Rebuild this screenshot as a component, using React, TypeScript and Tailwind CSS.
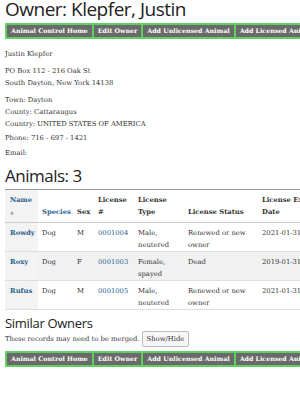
const serif = "font-['DejaVu_Serif',serif]";
const sans = "font-['Open_Sans',sans-serif]";

const actions = [
  "Animal Control Home",
  "Edit Owner",
  "Add Unlicensed Animal",
  "Add Licensed Animal",
];

function ActionBar() {
  return (
    <div className="flex w-max gap-[2px] bg-[#5fcf5f] p-[2px]">
      {actions.map((a) => (
        <span
          key={a}
          className={`${serif} whitespace-nowrap bg-[#6a6a6a] px-[4px] py-[1px] text-[6.3px] font-bold leading-[10px] text-white`}
        >
          {a}
        </span>
      ))}
    </div>
  );
}

const animals = [
  { name: "Rowdy", species: "Dog", sex: "M", lic: "0001004", type: ["Male,", "neutered"], status: ["Renewed or new", "owner"], exp: "2021-01-31" },
  { name: "Roxy", species: "Dog", sex: "F", lic: "0001003", type: ["Female,", "spayed"], status: ["Dead"], exp: "2019-01-31" },
  { name: "Rufus", species: "Dog", sex: "M", lic: "0001005", type: ["Male,", "neutered"], status: ["Renewed or new", "owner"], exp: "2021-01-31" },
];

export default function App() {
  return (
    <div className={`h-[403px] w-[300px] overflow-hidden bg-white pl-[5px] text-[#333] ${serif}`}>
      <h1 className={`${sans} -mt-[2px] mb-[3px] whitespace-nowrap text-[19px] leading-[22px] tracking-[-0.5px] text-[#222]`}>
        Owner: Klepfer, Justin
      </h1>
      <ActionBar />

      <div className="mt-[9px] text-[6.8px] leading-[12px]">
        <p>Justin Klepfer</p>
        <p className="mt-[5px]">PO Box 112 - 216 Oak St</p>
        <p>South Dayton, New York 14138</p>
        <p className="mt-[5px]">Town: Dayton</p>
        <p>County: Cattaraugus</p>
        <p>Country: UNITED STATES OF AMERICA</p>
        <p className="mt-[2px]">Phone: 716 - 697 - 1421</p>
        <p className="mt-[3px]">Email:</p>
      </div>

      <h2 className={`${sans} mt-[7px] w-[295px] border-b border-[#999] pb-[3px] text-[17px] leading-[20px] tracking-[-0.5px] text-[#222]`}>
        Animals: 3
      </h2>

      <table className="w-[333px] table-fixed border-collapse text-left text-[6.8px] leading-[12px]">
        <thead>
          <tr className="border-b border-[#ccc] align-bottom font-bold">
            <th className="w-[33px] bg-[#f3f3f3] pb-[4px] pl-[5px] pt-[4px] align-top text-[#2b5f8f]">
              Name
              <div className="text-[5px] font-normal text-[#aaa]">▲</div>
            </th>
            <th className="w-[35px] pb-[4px] pl-[4px] text-[#2b5f8f]">Species</th>
            <th className="w-[21px] pb-[4px] pl-[4px]">Sex</th>
            <th className="w-[40px] pb-[4px] pl-[4px]">License<br />#</th>
            <th className="w-[50px] pb-[4px] pl-[4px]">License<br />Type</th>
            <th className="w-[74px] pb-[4px] pl-[4px]">License Status</th>
            <th className="w-[80px] whitespace-nowrap pb-[4px] pl-[4px]">License Expiration<br />Date</th>
          </tr>
        </thead>
        <tbody>
          {animals.map((a, i) => (
            <tr
              key={a.name}
              className={`border-b border-[#ddd] align-top ${i === 1 ? "bg-[#f1f1f1]" : ""}`}
            >
              <td className="h-[29px] bg-[#f3f3f3] pl-[5px] pt-[4px] font-bold text-[#2b5f8f]">{a.name}</td>
              <td className="pl-[4px] pt-[4px]">{a.species}</td>
              <td className="pl-[4px] pt-[4px]">{a.sex}</td>
              <td className="pl-[4px] pt-[4px] text-[#2b5f8f]">{a.lic}</td>
              <td className="pl-[4px] pt-[4px]">
                {a.type[0]}
                <br />
                {a.type[1]}
              </td>
              <td className="pl-[4px] pt-[4px]">
                {a.status.map((s, j) => (
                  <div key={j}>{s}</div>
                ))}
              </td>
              <td className="pl-[4px] pt-[4px]">{a.exp}</td>
            </tr>
          ))}
        </tbody>
      </table>

      <h2 className={`${sans} mt-[5px] text-[13px] leading-[16px] tracking-[-0.3px] text-[#222]`}>Similar Owners</h2>
      <div className="flex h-[16px] items-center gap-[2px] text-[6.8px]">
        <span>These records may need to be merged.</span>
        <button className="rounded-[2px] border border-[#bbb] bg-[#f7f7f7] px-[4px] py-[2px] leading-[10px] text-[#333]">
          Show/Hide
        </button>
      </div>
      <div className="mt-[4px]">
        <ActionBar />
      </div>
    </div>
  );
}
